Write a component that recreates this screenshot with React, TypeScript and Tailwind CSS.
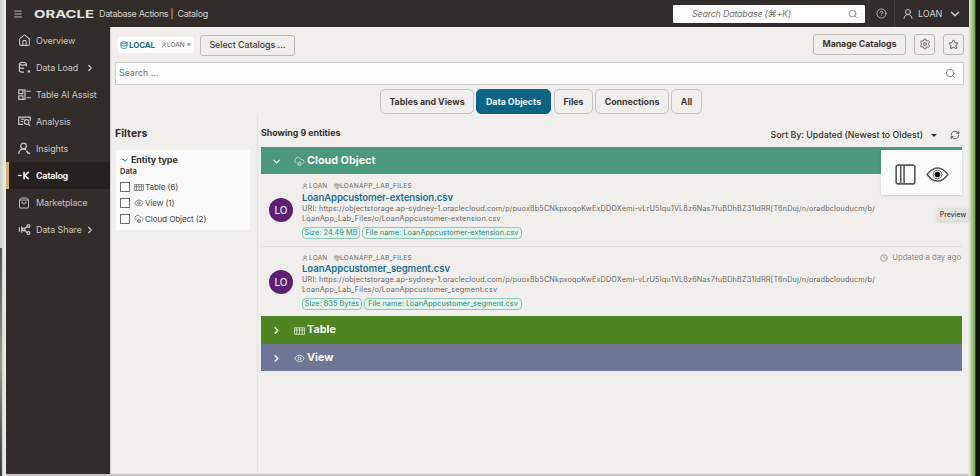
import React from "react";
import {
  Menu, House, ShoppingBag,
  ChevronRight, ChevronDown, Search, CircleHelp, UserRound, Settings, Star, Eye,
  CloudCog, RefreshCw, Clock, Database, Package,
} from "lucide-react";

function NavGlyph({ children }: { children: React.ReactNode }) {
  return (
    <svg viewBox="0 0 14 14" className="size-[13px]" fill="none" stroke="currentColor" strokeWidth="1.3">
      {children}
    </svg>
  );
}

function TableGlyph({ className }: { className: string }) {
  return (
    <svg viewBox="0 0 12 8" className={className} fill="none" stroke="currentColor" strokeWidth="1">
      <path d="M.5 .5h11v7H.5zM3 .5v7M6 .5v7M9 .5v7M.5 3h11" />
    </svg>
  );
}

const nav = [
  { label: "Overview", icon: <House size={13} strokeWidth={1.9} /> },
  {
    label: "Data Load",
    icon: (
      <NavGlyph>
        <path d="M9 6V3C9 1 1.5 1 1.5 3v7.5c0 1 2 1.6 5 1.5M1.5 3c0 1.8 7.5 1.8 7.5 0M1.5 6.5c0 1.2 3 1.6 5 1.2" />
        <path d="M10.5 10h2.5v2.5h-2.5z" fill="currentColor" stroke="none" />
      </NavGlyph>
    ),
    more: "ml-[7px]",
  },
  {
    label: "Table AI Assist",
    icon: (
      <NavGlyph>
        <path d="M.8 2h4.4v4H.8zM.8 8.5h4.4v3.8H.8zM5.2 2h2.3v10.3H5.2M9 3.5h5M9 10.5h5" />
      </NavGlyph>
    ),
  },
  {
    label: "Analysis",
    icon: (
      <NavGlyph>
        <path d="M5.5 10H.8V2.2h12.4v4" />
        <path d="M3 4.5h4M3 7h2.5" />
        <circle cx="9.3" cy="7.5" r="2.5" />
        <path d="M11 9.4l2.2 2.6" />
      </NavGlyph>
    ),
  },
  {
    label: "Insights",
    icon: (
      <NavGlyph>
        <circle cx="6" cy="4.2" r="3" />
        <path d="M.8 13c0-3.6 2-5.4 5-5.4 1.5 0 2.5.4 3.2 1.2" />
        <path d="M9.3 9.6l1.2 2 2.5.8" strokeWidth="1.8" />
      </NavGlyph>
    ),
  },
  {
    label: "Catalog",
    icon: (
      <NavGlyph>
        <path d="M0 7h4" />
        <path d="M6.5 3v8M11.5 3L7.5 7l4 4" strokeWidth="1.8" />
      </NavGlyph>
    ),
    active: true,
  },
  { label: "Marketplace", icon: <ShoppingBag size={12} strokeWidth={1.9} /> },
  {
    label: "Data Share",
    icon: (
      <NavGlyph>
        <path d="M1.5 4.5v5M4 3.5v7M6 7l4-3.5M6 7l4 3.5" />
        <circle cx="6" cy="7" r="1.4" />
        <circle cx="11.3" cy="3.2" r="1.5" />
        <circle cx="11.3" cy="10.8" r="1.5" />
      </NavGlyph>
    ),
    more: "ml-[3px]",
  },
];

function Sidebar() {
  return (
    <nav className="w-[104px] shrink-0 bg-[#322d2a] text-[#c8c4c0]">
      {nav.map((n) => (
        <div
          key={n.label}
          className={`flex h-[27px] items-center border-l-[3px] pl-[9px] text-[9px] whitespace-nowrap ${
            n.active ? "border-[#d2b06c] bg-[#26211f] font-bold tracking-[-0.3px] text-[#efedeb]" : "border-transparent tracking-[-0.12px]"
          }`}
        >
          <span className="flex w-[18px] shrink-0 items-center">{n.icon}</span>
          {n.label}
          {n.more && <ChevronRight size={10} strokeWidth={3} className={n.more} />}
        </div>
      ))}
    </nav>
  );
}

function Header() {
  return (
    <header className="flex h-[27px] shrink-0 items-center bg-[#322d2a] text-[#d5d1ce]">
      <Menu size={10} strokeWidth={2} className="ml-[7px] shrink-0" />
      <svg viewBox="0 0 62 10" className="ml-[11px] h-[10px] w-[62px] shrink-0 overflow-visible">
        <text x="0" y="9" textLength="60" lengthAdjust="spacingAndGlyphs" fill="#e6e3e0" fontSize="10.6" fontWeight="700" fontFamily="Inter, sans-serif">ORACLE</text>
      </svg>
      <span className="ml-[3px] w-[110px] text-[9px] tracking-[-0.34px] whitespace-nowrap">Database Actions | &nbsp;Catalog</span>
      <div className="ml-auto flex h-[18px] w-[192px] items-center justify-between rounded-[1px] bg-white pr-[7px] pl-[19px] text-[9px] text-[#77736f] italic">
        <span className="tracking-[-0.25px] whitespace-nowrap">Search Database (⌘+K)</span>
        <Search size={10} strokeWidth={1.8} />
      </div>
      <div className="ml-[3px] flex h-full w-[27px] items-center justify-center border-r border-l border-[#453f3c]">
        <CircleHelp size={11} strokeWidth={1.7} />
      </div>
      <div className="flex w-[74px] items-center pl-[7px] text-[9px]">
        <UserRound size={12} strokeWidth={2} />
        <span className="ml-[4px] w-[27px]">LOAN</span>
        <ChevronDown size={14} strokeWidth={2.4} className="ml-[3px]" />
      </div>
    </header>
  );
}

const boxed = "flex items-center justify-center rounded-[3px] border border-[#bcb9b6] whitespace-nowrap";

function Toolbar() {
  return (
    <div className="flex h-[35px] items-center pt-[1px] pr-[5px] pl-[7px]">
      <div className="flex h-[16px] w-[76px] items-center rounded-[2px] bg-white pl-[2px] text-[8px] text-[#1d6b86]">
        <Database size={8} strokeWidth={2.4} />
        <b className="ml-[1px] text-[8px] tracking-[-0.15px]">LOCAL</b>
        <span className="ml-[6px] flex items-center text-[6.5px] text-[#5c5855]">
          <UserRound size={6} />LOAN
        </span>
        <span className="mb-[4px] ml-[2px] text-[7px]">×</span>
      </div>
      <button className={`${boxed} ml-[6px] h-[21px] w-[95px] text-[8.8px] font-medium text-[#3c3835]`}>Select Catalogs ...</button>
      <button className={`${boxed} mb-[2px] ml-auto h-[21px] w-[93px] text-[8.8px] font-bold tracking-[-0.08px] text-[#3c3835]`}>Manage Catalogs</button>
      <button className={`${boxed} mb-[2px] ml-[8px] h-[21px] w-[21px] text-[#55514e]`}><Settings size={12} strokeWidth={1.7} /></button>
      <button className={`${boxed} mb-[2px] ml-[8px] h-[21px] w-[21px] text-[#55514e]`}><Star size={11} strokeWidth={2} /></button>
    </div>
  );
}

const tabs = [
  { label: "Tables and Views", cls: "w-[94px] border-[#c6c3c0] text-[#3c3835]" },
  { label: "Data Objects", cls: "ml-[2px] w-[75px] border-[#0c6485] bg-[#0c6485] text-[#e6f3f7]" },
  { label: "Files", cls: "ml-[3px] w-[39px] border-[#c6c3c0] text-[#3c3835]" },
  { label: "Connections", cls: "ml-[2px] w-[74px] border-[#c6c3c0] text-[#3c3835]" },
  { label: "All", cls: "ml-[2px] w-[31px] border-[#c6c3c0] text-[#3c3835]" },
];

function Filters() {
  const options = [
    { label: "Table (6)", icon: <TableGlyph className="h-[7px] w-[10px]" /> },
    { label: "View (1)", icon: <Eye size={10} strokeWidth={2} /> },
    { label: "Cloud Object (2)", icon: <CloudCog size={10} strokeWidth={2} /> },
  ];
  return (
    <aside className="w-[147px] shrink-0 border-r border-[#e5e3e1] pl-[4px]">
      <h2 className="flex h-[36px] items-center pt-[4px] text-[10.6px] font-bold text-[#302c2a]">Filters</h2>
      <div className="ml-px h-[80px] w-[134px] bg-[#fafafa] pt-[4px] pl-[4px] text-[#4b4744]">
        <div className="flex h-[11px] items-center text-[9px] font-bold tracking-[-0.1px] text-[#383431]">
          <ChevronDown size={10} strokeWidth={2.4} className="mr-[1px] text-[#287d99]" />Entity type
        </div>
        <div className="flex h-[14px] items-center text-[7.5px] font-bold">Data</div>
        {options.map((o) => (
          <label key={o.label} className="flex h-[16px] items-center text-[8.2px] tracking-[-0.15px] whitespace-nowrap">
            <span className="mr-[4px] size-[10px] border border-[#716d6a] bg-white" />
            <span className="mr-[1px] flex w-[10px] items-center text-[#76726f]">{o.icon}</span>
            {o.label}
          </label>
        ))}
      </div>
    </aside>
  );
}

function Entry({ file, size, cls, linkCls, chips, stamp }: { file: string; size: string; cls: string; linkCls: string; chips: string[]; stamp?: boolean }) {
  return (
    <article className={`relative flex pl-[8px] ${cls}`}>
      <div className="mt-[24px] flex size-[24px] shrink-0 items-center justify-center rounded-full bg-[#5c2170] text-[10px] font-medium text-[#eee2f2]">LO</div>
      <div className="ml-[9px] min-w-0 pt-[7px] text-[#6b6764]">
        <div className="flex h-[10px] items-center text-[6.5px] whitespace-nowrap">
          <UserRound size={6} strokeWidth={2} />
          <span className="ml-[1px] w-[24px] tracking-[0.2px]">LOAN</span>
          <Package size={6} strokeWidth={2} className="ml-px" />
          <span className="tracking-[0.32px]">LOANAPP_LAB_FILES</span>
        </div>
        <div className={`flex items-center text-[9.6px] font-semibold whitespace-nowrap text-[#24708d] ${linkCls}`}>{file}</div>
        <div className="flex h-[10px] items-center text-[7.3px] whitespace-nowrap">
          <span className="tracking-[0.14px]">URI: https://objectstorage.ap-sydney-1.oraclecloud.com/p/</span>
          <span className="tracking-[0.14px]">puox8b5CNkpxoqoKwExDDOXemi-vLrU5Iqu1VL8z6Nas7fuBDhBZ31ldRR[T6nDuj/n/oradbclouducm/b/</span>
        </div>
        <div className="flex h-[10px] items-center text-[7.3px] tracking-[0.17px] whitespace-nowrap">LoanApp_Lab_Files/o/{file}</div>
        <div className="mt-[3px] flex gap-[2px] text-[7.3px] tracking-[0.04px] whitespace-nowrap text-[#2f8a74]">
          <span className={`flex h-[12px] items-center justify-center rounded-[4px] border border-[#8fc7b8] bg-[#e5f3ee] ${chips[0]}`}>{size}</span>
          <span className={`flex h-[12px] items-center justify-center rounded-[4px] border border-[#8fc7b8] bg-[#e5f3ee] ${chips[1]}`}>File name: {file}</span>
        </div>
      </div>
      {stamp && (
        <div className="absolute top-[8px] right-[1px] flex items-center text-[7.7px] whitespace-nowrap text-[#8b8784]">
          <Clock size={8} className="mr-[4px]" />Updated a day ago
        </div>
      )}
    </article>
  );
}

function GroupBar({ label, icon, cls, open }: { label: string; icon: React.ReactNode; cls: string; open?: boolean }) {
  return (
    <div className={`flex shrink-0 items-center pt-px pl-[10px] text-[10.8px] font-bold text-[#f4faf7] ${cls}`}>
      {open ? <ChevronDown size={11} strokeWidth={2.5} /> : <ChevronRight size={11} strokeWidth={2.8} />}
      <span className="ml-[12px] flex w-[13px] items-center opacity-80">{icon}</span>
      {label}
    </div>
  );
}

export default function App() {
  return (
    <div className="flex h-[476px] w-[980px] overflow-hidden bg-[#f0efed] font-['Inter','Noto_Sans',sans-serif] leading-none">
      <div className="w-[6px] shrink-0 bg-linear-to-r from-[#c9cec8] to-[#eef2ee]">
        <div className="mt-[248px] h-[228px] w-[2px] bg-linear-to-b from-[#55544f] via-[#9b998a] to-[#3d3c38]" />
      </div>
      <div className="flex w-[963px] shrink-0 flex-col border-b-2 border-[#c9c5c3]">
        <Header />
        <div className="flex min-h-0 flex-1">
          <Sidebar />
          <main className="flex min-w-0 flex-1 flex-col border-l border-[#d8d5d3] bg-[#f0efed]">
            <Toolbar />
            <div className="mr-[5px] ml-[4px] flex h-[23px] shrink-0 items-center justify-between border border-[#d2cfcc] bg-white pr-[7px] pl-[3px] text-[8.8px] text-[#74706d]">
              Search ...
              <Search size={11} strokeWidth={1.8} />
            </div>
            <div className="mt-[4px] ml-[269px] flex h-[25px] shrink-0">
              {tabs.map((t) => (
                <button key={t.label} className={`flex items-center justify-center rounded-[5px] border pt-px text-[8.8px] font-bold whitespace-nowrap ${t.cls}`}>{t.label}</button>
              ))}
            </div>
            <div className="flex min-h-0 flex-1">
              <Filters />
              <section className="relative ml-[3px] flex w-[701px] shrink-0 flex-col">
                <div className="flex h-[33px] shrink-0 items-center text-[#34302d]">
                  <span className="pt-[5px] text-[8.8px] font-bold">Showing 9 entities</span>
                  <span className="mt-[10px] ml-auto text-[8.8px] font-medium whitespace-nowrap">Sort By: Updated (Newest to Oldest)</span>
                  <span className="mt-[9px] ml-[8px] border-x-[3px] border-t-[3px] border-x-transparent border-t-[#34302d]" />
                  <RefreshCw size={10} strokeWidth={1.8} className="mt-[9px] mr-[2px] ml-[13px]" />
                </div>
                <GroupBar open label="Cloud Object" icon={<CloudCog size={11} strokeWidth={1.7} />} cls="h-[27px] bg-[#4b987d]" />
                <Entry file="LoanAppcustomer-extension.csv" size="Size: 24.49 MB" cls="h-[73px] border-b border-[#e2e0de]" linkCls="h-[13px] tracking-[-0.13px]" chips={["w-[58px]", "w-[160px]"]} />
                <Entry stamp file="LoanAppcustomer_segment.csv" size="Size: 835 Bytes" cls="-mt-px h-[70px]" linkCls="h-[12px] tracking-[-0.08px]" chips={["w-[60px]", "w-[158px]"]} />
                <GroupBar label="Table" icon={<TableGlyph className="h-[8px] w-[11px]" />} cls="h-[28px] bg-[#4f8422]" />
                <GroupBar label="View" icon={<Eye size={11} strokeWidth={2} />} cls="h-[27px] bg-[#6e7595]" />
                <div className="absolute top-[36px] right-0 flex h-[45px] w-[81px] items-center bg-[#fcfcfc] pt-[3px] pl-[14px] text-[#5b5957] shadow-sm">
                  <svg viewBox="0 0 22 22" className="size-[21px]" fill="none" stroke="currentColor" strokeWidth="1.7">
                    <rect x="1.2" y="1.2" width="19.6" height="19.6" rx="2" />
                    <path d="M6 1v20M9.5 1v20" />
                  </svg>
                  <svg viewBox="0 0 24 18" className="ml-[10px] h-[17px] w-[23px]" fill="none" stroke="currentColor" strokeWidth="1.6">
                    <path d="M1 9Q6 2 12 2t11 7q-5 7-11 7T1 9z" />
                    <circle cx="12" cy="9" r="4.6" strokeWidth="1" />
                    <circle cx="12" cy="9" r="3" fill="#111" stroke="none" />
                  </svg>
                </div>
                <div className="absolute top-[94px] -right-[7px] flex h-[13px] w-[32px] items-center justify-center bg-[#e3e1df] text-[7px] font-medium text-[#4b4744] shadow-sm">Preview</div>
              </section>
            </div>
          </main>
        </div>
      </div>
      <div className="w-[11px] shrink-0 bg-linear-to-r from-[#dcebc8] via-[#7fa850] via-50% to-[#10140a] to-65%" />
    </div>
  );
}
